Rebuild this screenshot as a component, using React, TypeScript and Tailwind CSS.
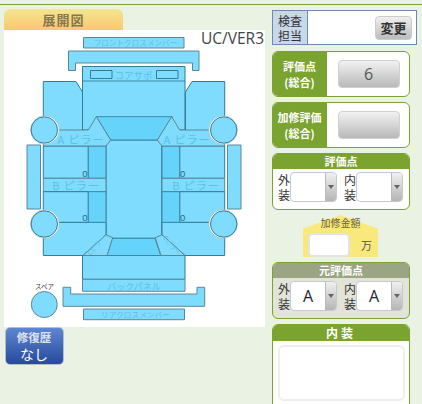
const jp = "font-['Noto_Sans_CJK_JP',sans-serif]";

const fillMain = 'fill-[#80dcff] stroke-[#2f7d99]';
const fillDark = 'fill-[#66d4fa] stroke-[#3b8aa5]';
const fillGrey = 'fill-[#80dcff] stroke-[#5d8694]';
const labelCls = "fill-[#5cc0e6] font-['Noto_Sans_CJK_JP',sans-serif]";
const zeroCls = "fill-[#1f6a85] font-['Liberation_Sans_Narrow','Liberation_Sans',sans-serif]";

// left half of the car, mirrored for the right side
function Side() {
  return (
    <>
      <path d="M27 145h13.5v64H27z" className={fillGrey} />
      {/* front fender */}
      <path d="M43.3 81.5H76l6.5 10.5V131H43.3z" className={fillMain} />
      {/* rear fender */}
      <path d="M43.3 222.3H106V235L83 255.5H43.3z" className={fillMain} />
      {/* doors */}
      <path d="M43.3 146H88.3V178.3H43.3z" className={fillMain} />
      <path d="M88.3 146H106V178.3H88.3z" className={fillDark} />
      <path d="M43.3 178.3H106V191.7H43.3z" className={fillGrey} />
      <path d="M43.3 191.7H88.3V222.3H43.3z" className={fillMain} />
      <path d="M88.3 191.7H106V222.3H88.3z" className={fillDark} />
      {/* a pillar */}
      <path d="M45 130H88.3L96.3 116.7 110.7 140 106 146H43.3z" className={fillGrey} />
      {/* c pillar */}
      <path d="M106 234.7 112.7 237.7 107 255.5H83z" className={fillGrey} />
      <circle cx="44.9" cy="130" r="14.3" className="fill-white stroke-[#a8a8a8]" strokeWidth="0.5" />
      <circle cx="44.3" cy="130" r="13.2" className={fillMain} />
      <circle cx="44.9" cy="224" r="14.3" className="fill-white stroke-[#a8a8a8]" strokeWidth="0.5" />
      <circle cx="44.3" cy="224" r="13.2" className={fillMain} />
    </>
  );
}

function CarDiagram() {
  return (
    <svg viewBox="4 30 261 297" className="w-[261px] h-[297px] block">
      <g strokeWidth="1">
        <path d="M83.5 37.5H184V48H83.5z" className={fillGrey} />
        <path d="M68.5 51H199V70.5H192.5V63H75.5V70.5H68.5z" className={fillGrey} />
        <path d="M82.5 66.5H185V130H82.5z" className={fillMain} />
        <path d="M82.5 81H185" className="stroke-[#3b8aa5] fill-none" />
        <path d="M90.5 70.5H112V78.5H90.5zM156.5 70.5H178V78.5H156.5z" className={fillMain} />

        <path d="M106 140H161.7V238.3H106z" className={fillMain} />
        <path d="M82.5 255.5H185V279.3H82.5z" className={fillMain} />
        <path d="M82.5 279.3H185V291.3H82.5z" className={fillGrey} />
        <path d="M96.3 116.7H172.3L157.3 140H110.7z" className={fillDark} />
        <path d="M112.3 238.3H155L160.7 255.5H107z" className={fillDark} />

        <Side />
        <g transform="matrix(-1 0 0 1 268 0)">
          <Side />
        </g>

        <path d="M63 287.3H70.7V294H197V287.3H204.7V306.3H63z" className={fillGrey} />
        <path d="M83.5 309H184.5V319.7H83.5z" className={fillGrey} />
        <circle cx="44.3" cy="304.5" r="13" className={fillGrey} />
      </g>

      <g textAnchor="middle">
        <text x="135.5" y="45.5" fontSize="7.6" className={labelCls}>フロントクロスメンバー</text>
        <text x="133.5" y="78.5" fontSize="9.5" className={labelCls}>コアサポ</text>
        <text x="81" y="143.5" fontSize="11" letterSpacing="1" className={labelCls}>A ピラー</text>
        <text x="187" y="143.5" fontSize="11" letterSpacing="1" className={labelCls}>A ピラー</text>
        <text x="76" y="189.5" fontSize="11" letterSpacing="1" className={labelCls}>B ピラー</text>
        <text x="196" y="189.5" fontSize="11" letterSpacing="1" className={labelCls}>B ピラー</text>
        <text x="134" y="289.5" fontSize="9" className={labelCls}>バックパネル</text>
        <text x="135.5" y="318" fontSize="7.7" className={labelCls}>リアクロスメンバー</text>
        <text x="44.5" y="289" fontSize="6.5" className={`fill-[#444] ${jp}`}>スペア</text>
        <text x="85" y="176.5" fontSize="9.5" className={zeroCls}>0</text>
        <text x="85" y="220.5" fontSize="9.5" className={zeroCls}>0</text>
        <text x="182.7" y="176.5" fontSize="9.5" className={zeroCls}>0</text>
        <text x="182.7" y="220.5" fontSize="9.5" className={zeroCls}>0</text>
        <text transform="translate(98 247) rotate(-50)" fontSize="6.5" className={labelCls}>Cピラー</text>
        <text transform="translate(170 247) rotate(50)" fontSize="6.5" className={labelCls}>Cピラー</text>
      </g>
    </svg>
  );
}

function ScoreCard({ lines, value }: { lines: string[]; value?: string }) {
  return (
    <div className="flex h-[46px] w-[138px] rounded-[6px] border border-[#7ba32f] bg-white overflow-hidden">
      <div className="w-[55px] -ml-px bg-[#7ba32f] flex flex-col items-center justify-center text-white font-bold text-[11px] leading-[16px] whitespace-nowrap">
        {lines.map((l) => (
          <span key={l}>{l}</span>
        ))}
      </div>
      <div className="flex-1 flex items-center justify-center pl-px">
        <button className="w-[62px] h-[28px] rounded-[4px] border border-[#d0d0d0] bg-gradient-to-b from-[#f2f2f2] to-[#b9b9b9] text-[#555] text-[16px] font-['Open_Sans',sans-serif]">
          {value}
        </button>
      </div>
    </div>
  );
}

function FakeSelect({ label, value }: { label: string; value?: string }) {
  return (
    <div className="flex items-center">
      <div className="w-[12px] text-[12px] leading-[15px] text-[#333] ml-[6px]">
        {label}
        <br />装
      </div>
      <div className="flex w-[47px] h-[30px] rounded-[4px] border border-[#c8c8c8] overflow-hidden bg-white">
        <div className="flex-1 flex items-center justify-center text-[16px] text-[#223] font-['Open_Sans',sans-serif]">{value}</div>
        <div className="w-[11px] bg-gradient-to-b from-[#f0f0f0] to-[#b5b5b5] border-l border-[#bbb] flex items-center justify-center">
          <div className="w-0 h-0 border-x-[3.5px] border-x-transparent border-t-[4px] border-t-[#666]" />
        </div>
      </div>
    </div>
  );
}

export default function App() {
  return (
    <div className={`w-[422px] h-[404px] overflow-hidden bg-[#eaf2e3] pt-[4px] ${jp}`}>
      <div className="border-t border-[#7ba32f] flex items-start">
        {/* left column */}
        <div className="ml-[4px] w-[261px] pt-[4px]">
          <div className="w-[119px] h-[21px] rounded-t-[6px] bg-gradient-to-b from-[#f5e68f] to-[#f8c870] flex items-center justify-center text-[13px] font-bold tracking-[1px] text-[#85784f]">
            展開図
          </div>
          <div className="relative bg-white h-[297px]">
            <CarDiagram />
            <span className="absolute top-[-1px] right-[1px] text-[15.5px] leading-[18px] text-[#444] font-['Open_Sans',sans-serif]">UC/VER3</span>
          </div>
          <div className="ml-[0.5px] w-[59px] h-[38px] rounded-[5px] border border-[#b8bcc4] bg-gradient-to-b from-[#5f86d2] to-[#274a9c] flex flex-col items-center justify-center text-[11.5px] leading-[17px]">
            <span className="font-bold text-[#dde3ee]">修復歴</span>
            <span className="text-white text-[14px]">なし</span>
          </div>
        </div>

        {/* right column */}
        <div className="ml-[7px] w-[145px] pt-[5px] flex flex-col">
          <div className="flex h-[35px] w-[145px] border border-[#6a8bab] bg-white">
            <div className="w-[35px] bg-[#c9d8e8] border-r border-[#6a8bab] text-[12px] leading-[15px] text-[#333] flex items-center justify-center text-center">
              検査
              <br />
              担当
            </div>
            <div className="flex-1 flex items-center justify-end pr-[4px]">
              <button className="w-[37px] h-[24px] rounded-[4px] border border-[#ccc] bg-gradient-to-b from-[#f0f0f0] to-[#bcbcbc] text-[13px] font-bold text-[#333]">変更</button>
            </div>
          </div>

          <div className="mt-[6px] flex flex-col gap-[5px]">
            <ScoreCard lines={['評価点', '(総合)']} value="6" />
            <ScoreCard lines={['加修評価', '(総合)']} />
          </div>

          <div className="mt-[5px] w-[138px] h-[57px] rounded-[6px] border border-[#7ba32f] bg-white overflow-hidden">
            <div className="h-[15px] bg-[#7ba32f] text-white text-[11px] font-bold leading-[15px] text-center">評価点</div>
            <div className="flex pt-[3px] gap-px -ml-px">
              <FakeSelect label="外" />
              <FakeSelect label="内" />
            </div>
          </div>

          {/* repair amount */}
          <div className="relative mt-[5px] ml-[31px] w-[75px] h-[42px]">
            <div className="absolute inset-0 bg-[#f9e97c] [clip-path:polygon(0_33%,50%_0,100%_33%,100%_100%,0_100%)]" />
            <div className="relative pt-px text-center text-[10px] leading-[14px] text-[#6b6238]">加修金額</div>
            <div className="absolute left-[5px] bottom-0 w-[42px] h-[24px] bg-white rounded-[5px] border-2 border-[#e3e3e3]" />
            <span className="absolute right-[6px] bottom-[6px] text-[11px] leading-[12px] text-[#555]">万</span>
          </div>

          <div className="mt-[5px] w-[138px] h-[57px] rounded-[6px] border border-[#7ba32f] bg-[#e2e4da] overflow-hidden">
            <div className="h-[15px] bg-[#9aa583] text-white text-[11px] font-bold leading-[15px] text-center">元評価点</div>
            <div className="flex pt-[3px] gap-px -ml-px">
              <FakeSelect label="外" value="A" />
              <FakeSelect label="内" value="A" />
            </div>
          </div>

          <div className="mt-[5px] w-[138px] h-[90px] rounded-[6px] border border-[#7ba32f] bg-white overflow-hidden">
            <div className="h-[16px] bg-[#7ba32f] text-white text-[12px] font-bold leading-[16px] text-center tracking-[3px]">内装</div>
            <div className="ml-[5px] mt-[4px] w-[127px] h-[56px] rounded-[6px] border-2 border-[#eeeeee] bg-white" />
          </div>
        </div>
      </div>
    </div>
  );
}
